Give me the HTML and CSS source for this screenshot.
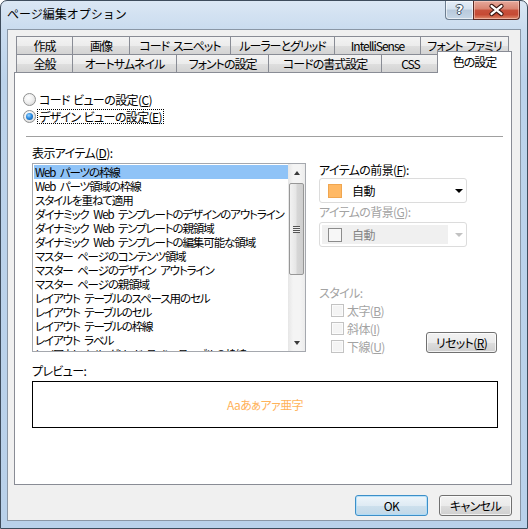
FILE: index.html
```html
<!DOCTYPE html>
<html lang="ja">
<head>
<meta charset="utf-8">
<title>ページ編集オプション</title>
<link rel="stylesheet" href="styles.css">
</head>
<body>
<div class="window">
  <div class="titlebar">
    <span class="title">ページ編集オプション</span>
    <div class="caption">
      <div class="cap-btn help"><span>?</span></div>
      <div class="cap-btn close">
        <svg width="46" height="18" viewBox="0 0 46 18">
          <path d="M18 5 L28 13 M28 5 L18 13" stroke="#3b1712" stroke-width="4.6" stroke-linecap="round" fill="none"/>
          <path d="M18 5 L28 13 M28 5 L18 13" stroke="#ffffff" stroke-width="2.4" stroke-linecap="round" fill="none"/>
        </svg>
      </div>
    </div>
  </div>
  <div class="client">
    <div class="tabs">
      <div class="tab-row">
        <div class="tab w56">作成</div>
        <div class="tab w57">画像</div>
        <div class="tab w101">コード スニペット</div>
        <div class="tab w104">ルーラーとグリッド</div>
        <div class="tab w86">IntelliSense</div>
        <div class="tab w88">フォント ファミリ</div>
      </div>
      <div class="tab-row front">
        <div class="tab w56">全般</div>
        <div class="tab w104">オートサムネイル</div>
        <div class="tab w92">フォントの設定</div>
        <div class="tab w113">コードの書式設定</div>
        <div class="tab w58">CSS</div>
        <div class="tab w70 selected">色の設定</div>
      </div>
    </div>
    <div class="panel">
      <div class="radios">
        <div class="radio-row"><span class="radio"></span><span class="rlabel">コード ビューの設定(<u>C</u>)</span></div>
        <div class="radio-row"><span class="radio checked"></span><span class="rlabel focus">デザイン ビューの設定(<u>E</u>)</span></div>
      </div>
      <div class="separator"></div>
      <div class="main">
        <div class="list-label">表示アイテム(<u>D</u>):</div>
        <div class="listbox">
          <div class="items">
            <div class="item sel">Web パーツの枠線</div>
            <div class="item">Web パーツ領域の枠線</div>
            <div class="item">スタイルを重ねて適用</div>
            <div class="item">ダイナミック Web テンプレートのデザインのアウトライン</div>
            <div class="item">ダイナミック Web テンプレートの親領域</div>
            <div class="item">ダイナミック Web テンプレートの編集可能な領域</div>
            <div class="item">マスター ページのコンテンツ領域</div>
            <div class="item">マスター ページのデザイン アウトライン</div>
            <div class="item">マスター ページの親領域</div>
            <div class="item">レイアウト テーブルのスペース用のセル</div>
            <div class="item">レイアウト テーブルのセル</div>
            <div class="item">レイアウト テーブルの枠線</div>
            <div class="item">レイアウト ラベル</div>
            <div class="item">レイアウト セル グリッド ライン テーブルの枠線</div>
          </div>
          <div class="scrollbar">
            <div class="sb-btn"><span class="tri up"></span></div>
            <div class="sb-track"><div class="thumb"><span class="grip"></span></div></div>
            <div class="sb-btn"><span class="tri down"></span></div>
          </div>
        </div>
        <div class="right">
          <div class="rlab">アイテムの前景(<u>F</u>):</div>
          <div class="combo">
            <span class="swatch orange"></span><span class="ctext">自動</span><span class="carrow"></span>
          </div>
          <div class="rlab disabled second">アイテムの背景(<u>G</u>):</div>
          <div class="combo off">
            <div class="cinner"><span class="swatch empty"></span><span class="ctext">自動</span></div><span class="carrow"></span>
          </div>
          <div class="rlab disabled style-lab">スタイル:</div>
          <div class="style-row">
            <div class="checks">
              <div class="check-row"><span class="cbox"></span><span>太字(<u>B</u>)</span></div>
              <div class="check-row"><span class="cbox"></span><span>斜体(<u>I</u>)</span></div>
              <div class="check-row"><span class="cbox"></span><span>下線(<u>U</u>)</span></div>
            </div>
            <div class="btn reset">リセット(<u>R</u>)</div>
          </div>
        </div>
      </div>
      <div class="preview-label">プレビュー:</div>
      <div class="preview"><span>Aaあぁアァ亜字</span></div>
    </div>
    <div class="footer">
      <div class="btn ok">OK</div>
      <div class="btn cancel">キャンセル</div>
    </div>
  </div>
</div>
</body>
</html>
```
FILE: styles.css
```css
html, body {
  margin: 0;
  padding: 0;
  background: #ffffff;
}
body {
  font-family: "Noto Sans CJK JP", "Noto Sans", sans-serif;
  font-size: 12px;
  color: #000;
  font-feature-settings: "palt";
  letter-spacing: -0.6px;
  word-spacing: 1px;
}
u { text-decoration: underline; text-underline-offset: 1px; }

.window {
  width: 528px;
  height: 529px;
  box-sizing: border-box;
  border: 1px solid #3e4c5c;
  border-radius: 7px 7px 0 0;
  background: linear-gradient(180deg, #dbe7f4 0px, #cadcef 28px, #bcd3eb 80px, #b9d1ea 100%);
  display: flex;
  flex-direction: column;
  overflow: hidden;
}

.titlebar {
  height: 28px;
  display: flex;
  align-items: flex-start;
  flex: none;
}
.title {
  padding-left: 6px;
  line-height: 26px;
  font-size: 12px;
  font-feature-settings: normal;
  letter-spacing: 0;
}
.caption {
  margin-left: auto;
  margin-right: 7px;
  display: flex;
}
.cap-btn {
  height: 19px;
  box-sizing: border-box;
  display: flex;
  align-items: center;
  justify-content: center;
}
.help {
  width: 28px;
  border: 1px solid #6d7e91;
  border-top: none;
  border-right: none;
  border-radius: 0 0 0 4px;
  background: linear-gradient(180deg, #e5eef8 0%, #d5e2ef 45%, #b8c9db 50%, #c6d6e6 100%);
  box-shadow: inset 0 0 0 1px rgba(255,255,255,0.6);
}
.help span {
  color: #fff;
  font-weight: bold;
  font-size: 13px;
  line-height: 18px;
  letter-spacing: 0;
  font-family: "DejaVu Sans", sans-serif;
  text-shadow: 1px 0 #3a4a5c, -1px 0 #3a4a5c, 0 1px #3a4a5c, 0 -1px #3a4a5c;
}
.close {
  width: 47px;
  border: 1px solid #5b2b25;
  border-top: none;
  border-radius: 0 0 4px 0;
  background: linear-gradient(180deg, #e6a99c 0%, #d88370 45%, #c8513c 50%, #c64a34 75%, #de8a6c 100%);
  box-shadow: inset 0 0 0 1px rgba(255,220,210,0.5);
}

.client {
  flex: 1;
  margin: 0 6px 7px 6px;
  border: 1px solid #8a97a6;
  background: #f0f0f0;
  padding: 6px 8px 0 6px;
  display: flex;
  flex-direction: column;
}

.tabs {
  margin-left: 2px;
  display: flex;
  flex-direction: column;
}
.tab-row {
  display: flex;
  height: 18px;
  align-items: flex-end;
}
.tab {
  height: 18px;
  box-sizing: border-box;
  border: 1px solid #898c95;
  border-bottom: none;
  margin-right: -1px;
  background: linear-gradient(180deg, #f3f3f3 0%, #ececec 50%, #dfdfdf 51%, #d3d3d3 100%);
  display: flex;
  align-items: center;
  justify-content: center;
  line-height: 14px;
  white-space: nowrap;
  letter-spacing: -1px;
  word-spacing: 2px;
}
.w56 { width: 57px; }
.w57 { width: 58px; }
.w58 { width: 59px; }
.w70 { width: 71px; }
.w86 { width: 87px; }
.w88 { width: 89px; }
.w92 { width: 93px; }
.w101 { width: 102px; }
.w104 { width: 105px; }
.w113 { width: 114px; }
.tab.selected {
  position: relative;
  z-index: 2;
  height: 22px;
  margin: 0 -3px -1px -2px;
  width: 75px;
  background: #ffffff;
  padding-bottom: 2px;
}

.panel {
  width: 498px;
  height: 413px;
  box-sizing: border-box;
  border: 1px solid #898c95;
  background: #ffffff;
  display: flex;
  flex-direction: column;
}

.radios {
  margin-top: 18px;
  padding-left: 8px;
}
.radio-row {
  height: 17px;
  display: flex;
  align-items: center;
}
.radio {
  width: 13px;
  height: 13px;
  box-sizing: border-box;
  border-radius: 50%;
  border: 1px solid #8e8f8f;
  background: radial-gradient(circle at 40% 35%, #ffffff 0%, #f0f0f0 45%, #cfcfcf 100%);
  margin-right: 1px;
  flex: none;
  display: flex;
  align-items: center;
  justify-content: center;
}
.radio.checked::after {
  content: "";
  width: 7px;
  height: 7px;
  border-radius: 50%;
  background: radial-gradient(circle at 40% 35%, #9fd6ff 0%, #2b8be0 45%, #0a4d96 100%);
}
.rlabel {
  line-height: 13px;
  padding: 0 1px;
  border: 1px solid transparent;
}
.rlabel.focus {
  border: 1px dotted #000;
}

.separator {
  height: 1px;
  background: #a0a0a0;
  margin: 11px 8px 0 11px;
}

.main {
  margin: 9px 0 0 17px;
  display: grid;
  grid-template-columns: 274px 178px;
  grid-template-rows: auto auto;
  column-gap: 13px;
}
.list-label {
  grid-column: 1;
  grid-row: 1;
  line-height: 14px;
  margin-bottom: 3px;
}
.listbox {
  grid-column: 1;
  grid-row: 2;
  height: 189px;
  box-sizing: border-box;
  border: 1px solid #a5a8ae;
  display: flex;
  overflow: hidden;
}
.items {
  flex: 1;
  min-width: 0;
  padding: 1px 0 0 1px;
  overflow: hidden;
}
.item {
  height: 14px;
  line-height: 14px;
  padding-left: 1px;
  white-space: nowrap;
  font-size: 11.5px;
  letter-spacing: -1.1px;
  word-spacing: 3px;
}
.item.sel {
  background: #8fc3f7;
}
.scrollbar {
  width: 17px;
  flex: none;
  display: flex;
  flex-direction: column;
  background: linear-gradient(90deg, #e6e6e6 0%, #f4f4f4 30%, #f4f4f4 70%, #ececec 100%);
}
.sb-btn {
  height: 17px;
  display: flex;
  align-items: center;
  justify-content: center;
}
.tri {
  width: 0;
  height: 0;
  border-left: 3.5px solid transparent;
  border-right: 3.5px solid transparent;
}
.tri.up { border-bottom: 4px solid #3a3a3a; }
.tri.down { border-top: 4px solid #3a3a3a; }
.sb-track {
  flex: 1;
  padding: 2px 1px 0 1px;
}
.thumb {
  height: 92px;
  box-sizing: border-box;
  border: 1px solid #979797;
  border-radius: 2px;
  background: linear-gradient(90deg, #f2f2f2 0%, #e6e6e6 45%, #d6d6d6 55%, #cfcfcf 100%);
  display: flex;
  align-items: center;
  justify-content: center;
}
.grip {
  width: 7px;
  height: 7px;
  background: repeating-linear-gradient(180deg, #555 0px, #555 1px, #eee 1px, #eee 2px);
}

.right {
  grid-column: 2;
  grid-row: 2;
  display: flex;
  flex-direction: column;
}
.rlab {
  line-height: 14px;
  white-space: nowrap;
}
.rlab.disabled { color: #a3a3a3; }
.rlab.second { margin-top: 2px; }
.rlab.style-lab { margin-top: 39px; }
.combo {
  margin-top: 1px;
  width: 148px;
  height: 25px;
  box-sizing: border-box;
  border: 1px solid #dcdcdc;
  border-radius: 3px;
  display: flex;
  align-items: center;
  padding-left: 8px;
  background: #fff;
}
.combo.off {
  margin-top: 3px;
  padding-left: 2px;
}
.cinner {
  width: 126px;
  height: 19px;
  background: #f0f0f0;
  display: flex;
  align-items: center;
  padding-left: 6px;
  box-sizing: border-box;
}
.swatch {
  width: 14px;
  height: 14px;
  box-sizing: border-box;
  flex: none;
}
.swatch.orange {
  background: #ffb965;
  border: 1px solid #f0a650;
}
.swatch.empty {
  border: 1px solid #8c8c8c;
  background: #f7f7f7;
}
.ctext {
  margin-left: 10px;
  line-height: 14px;
}
.combo.off .ctext { color: #858585; }
.carrow {
  margin-left: auto;
  margin-right: 3px;
  width: 0;
  height: 0;
  border-left: 4px solid transparent;
  border-right: 4px solid transparent;
  border-top: 4px solid #000;
}
.combo.off .carrow { border-top-color: #c2c2c2; }
.style-row {
  margin-top: 1px;
  display: flex;
  align-items: flex-end;
  justify-content: space-between;
}
.checks {
  padding-left: 12px;
  color: #a3a3a3;
}
.check-row {
  height: 18px;
  display: flex;
  align-items: center;
}
.cbox {
  width: 13px;
  height: 13px;
  box-sizing: border-box;
  border: 1px solid #c3c3c3;
  background: #f4f4f4;
  box-shadow: inset 0 0 0 1px #fbfbfb;
  margin-right: 3px;
  flex: none;
}
.btn {
  box-sizing: border-box;
  height: 21px;
  border: 1px solid #707070;
  border-radius: 3px;
  background: linear-gradient(180deg, #f2f2f2 0%, #ebebeb 50%, #dddddd 51%, #cfcfcf 100%);
  box-shadow: inset 0 0 0 1px rgba(255,255,255,0.7);
  display: flex;
  align-items: center;
  justify-content: center;
  line-height: 14px;
  white-space: nowrap;
}
.reset {
  width: 71px;
  margin-bottom: 2px;
}

.preview-label {
  margin: 9px 0 0 17px;
  line-height: 14px;
}
.preview {
  margin: 3px 0 0 17px;
  width: 466px;
  height: 47px;
  box-sizing: border-box;
  border: 1px solid #000;
  display: flex;
  align-items: center;
  justify-content: center;
}
.preview span {
  color: #ffb25a;
  line-height: 14px;
}

.footer {
  margin-top: 10px;
  display: flex;
  justify-content: flex-end;
  gap: 11px;
}
.ok, .cancel { width: 73px; }
.ok {
  border-color: #3c8fc8;
  background: linear-gradient(180deg, #eef5fa 0%, #dfebf4 50%, #cde0ed 51%, #c0d8e8 100%);
  box-shadow: inset 0 0 0 1px rgba(170,220,250,0.8);
}
```
